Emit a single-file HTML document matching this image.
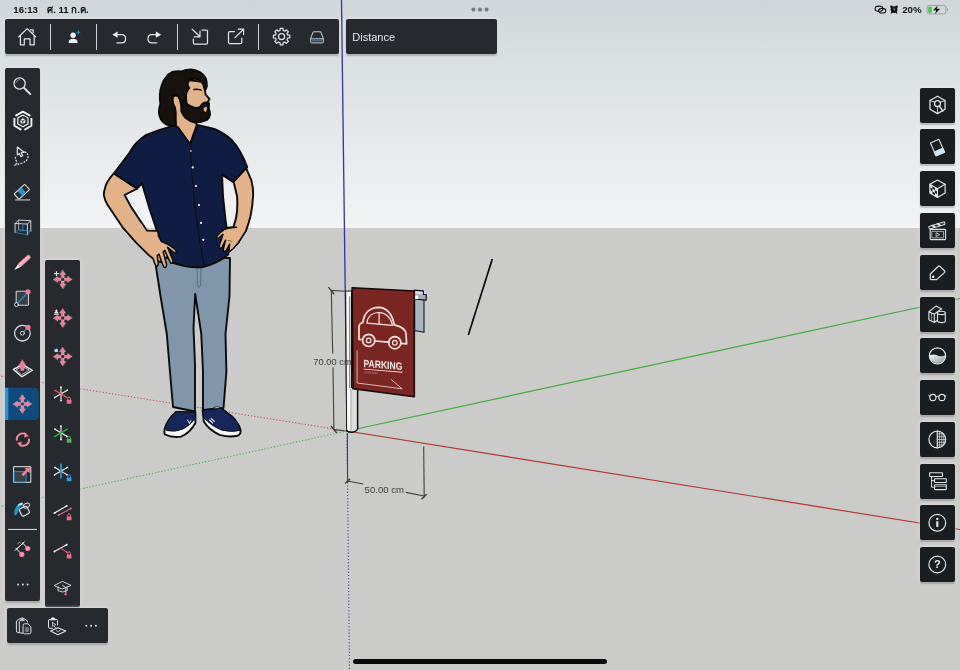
<!DOCTYPE html>
<html lang="th">
<head>
<meta charset="utf-8">
<title>SketchUp</title>
<style>
html,body{margin:0;padding:0;}
body{width:960px;height:670px;overflow:hidden;position:relative;background:#cbcbca;font-family:"Liberation Sans","DejaVu Sans",sans-serif;}
#sky{position:absolute;left:0;top:0;width:960px;height:228px;background:linear-gradient(to bottom,#d0d6d9 0,#dbe0e2 70px,#e8ebec 150px,#f1f3f4 228px);}
#scene{will-change:transform;position:absolute;left:0;top:0;width:960px;height:670px;}
.tb{will-change:transform;position:absolute;background:#262a2e;border-radius:2px;box-shadow:0 1.5px 1.5px rgba(0,0,0,.22),0 0 3px 1px rgba(238,238,236,.55);}
.tb svg{position:absolute;overflow:visible;}
.sep{position:absolute;background:#cfd3d6;}
#status{will-change:transform;position:absolute;left:0;top:0;width:960px;height:19px;color:#111;font-size:11px;font-weight:bold;}
#status>span{position:absolute;top:3px;white-space:nowrap;}
.rb{will-change:transform;position:absolute;left:920px;width:35px;height:35px;background:#1a1e21;border-radius:2px;box-shadow:0 1.5px 1.5px rgba(0,0,0,.22),0 0 3px 1px rgba(238,238,236,.55);}
.rb svg{position:absolute;left:0;top:0;}
#homebar{position:absolute;left:353px;top:659px;width:254px;height:5px;border-radius:3px;background:#0a0a0a;}
</style>
</head>
<body>
<div id="sky"></div>

<!-- SCENE -->
<svg id="scene" width="960" height="670" viewBox="0 0 960 670">
<!--SCENE-START-->
<!-- axes -->
<line x1="347" y1="431" x2="0" y2="376" stroke="#c9443c" stroke-width="1.1" stroke-dasharray="1.2 2"/>
<line x1="347" y1="431" x2="0" y2="506.5" stroke="#45b043" stroke-width="1.1" stroke-dasharray="1.2 2"/>
<line x1="347" y1="431" x2="349.5" y2="670" stroke="#3a3ca8" stroke-width="1.1" stroke-dasharray="1.1 2.1"/>
<line x1="347" y1="431" x2="960" y2="298.5" stroke="#41ab3c" stroke-width="1.2"/>
<line x1="347" y1="431" x2="960" y2="529.5" stroke="#b3352e" stroke-width="1.2"/>
<line x1="341.5" y1="0" x2="347" y2="431" stroke="#3234a0" stroke-width="1.3"/>

<!-- black guide line -->
<line x1="492.3" y1="259" x2="468.3" y2="335" stroke="#0c0c0c" stroke-width="1.7"/>

<!-- MAN -->
<g id="man" stroke="#0b0b0b" stroke-width="1.9" stroke-linejoin="round" stroke-linecap="round">
<!-- jeans -->
<path d="M156 258 L156 267 L160.5 296 L166.8 334 L170 372 L173 407 L195 411.5 L195 365 L193.5 328 L195.2 294 L201.3 334 L203 372 L203 410 L223.5 408 L226.4 372 L225.5 334 L229.5 296 L230 258 Z" fill="#8096ab"/>
<path d="M197 268 L197.5 285 Q199 290 200.5 285 L201 268" fill="none" stroke="#4f647a" stroke-width="0.8"/>
<!-- shoes -->
<path d="M176 412 Q168 419 165.3 427 Q163.6 432 165 434.5 Q172 438 181 436.6 Q190 433 195.4 423 L195.4 412.5 Z" fill="#f6f6f6"/>
<path d="M176 412 Q168 419 165.3 427 Q165 429.5 166.5 430.5 Q175 432.5 183 429 Q190 425.5 195.4 418.5 L195.4 412.5 Z" fill="#16265a" stroke-width="0.9"/>
<path d="M187.5 420 L189.5 423.5 L190.8 420.6" fill="none" stroke="#fff" stroke-width="0.9"/>
<path d="M202.6 410.5 L203.8 421.5 Q209 430 219.5 434.8 Q229 437.6 237.6 435.8 Q241.6 433.5 240.4 429.5 Q238.4 423 232 416.5 L228 413.6 L221.5 408.5 Z" fill="#f6f6f6"/>
<path d="M202.6 410.5 L203.6 417.5 Q211 426 222 430.2 Q232 432.6 240.2 430.4 L240 428.8 Q238.2 422.8 232 416.5 L228 413.6 L221.5 408.5 Z" fill="#16265a" stroke-width="0.9"/>
<path d="M209.5 420 L212.6 422.8 M211.3 418.6 L214.4 421.4" fill="none" stroke="#fff" stroke-width="1.1"/>
<path d="M213 408.2 Q216.5 405.2 221 408" fill="#f0f0f0" stroke-width="0.9"/>
<!-- left arm (viewer's left) -->
<path d="M113.8 173.4 Q106 182 104.9 188.7 Q103.6 192 104 195.9 Q105 201 107.5 204.8 L121.9 226.3 L136.2 242.5 L148.8 255 L153 258.3 L160 262 L170 255 L157 231.5 L147 230.8 L141.6 222.7 L130.9 206.6 L124.6 195 L137.1 188.7 Z" fill="#e2b389"/>
<!-- right arm -->
<path d="M246 167.9 L251.4 180.4 Q253.4 188 253.2 194.8 Q252.6 206 250.5 216.2 Q248.6 224 246 230.6 L238 243.1 L229.9 251.1 L222 250 L217 237 L221 231.5 L227 228 L233.5 227 Q236.6 218 237.1 210.9 Q237.6 203 237.1 196.5 L233.5 181.3 Z" fill="#e2b389"/>
<!-- neck -->
<path d="M172.3 97 Q174.5 94 178 95.6 L182 104 L196 118 L196.5 126 L190 144 L176 126 L175.2 108 Q172 103 172.3 97 Z" fill="#e2b389"/>
<!-- shirt -->
<path d="M171 126.3 Q158 130 145.7 135.2 Q135 142 129.3 153 L114 173.3 L137 188.5 L142 183.5 L149.6 209 L157.2 231.6 L163 246 L169 258 L171 262 Q186 268 201.6 267.3 Q217 264 228.2 254.5 L228.6 240 L225.7 221.5 L223 196 L222 174.6 L233.3 182.2 L247.2 167 Q241 150 232 140.3 Q224 133 214.3 129 L197.4 125 L190.2 144.5 L178 127.2 L174 125.6 Z" fill="#0e1d41"/>
<path d="M190.2 144 Q192 200 204 267" fill="none" stroke-width="0.9"/>
<g fill="#fff" stroke="none"><circle cx="190.8" cy="151" r="0.8"/><circle cx="192.7" cy="167.4" r="1.1"/><circle cx="196" cy="186" r="1.1"/><circle cx="199" cy="205" r="1.1"/><circle cx="201" cy="222.8" r="1.1"/><circle cx="203.3" cy="239.8" r="1.1"/></g>
<!-- hands (over shirt) -->
<path d="M141.6 222.7 L147 230.8 L157.1 231 Q158.6 232.6 158.4 236 L161.5 241.6 Q169 244 175.6 250 Q177 252.8 174.6 253 Q171.5 250.8 167.6 247.4 L173 260.4 Q173.4 263.8 170.8 263.2 Q168 258 164.8 250.4 L163.2 252 L166.6 264.5 Q166.5 268.2 164 267.2 Q161.5 262 159 254.2 L157.2 255.6 L158.2 263 Q158 266.8 156.2 266.4 Q154.5 264 153 258.3 L148.8 255 L136.2 242.5 L121.9 226.3" fill="#e2b389" stroke-width="1.5"/>
<path d="M246 230.6 L238 243.1 Q233.5 249 229.4 251.9 Q228.6 249 229.6 244.2 L226.6 250 Q224.8 252.4 223.2 250.7 Q223.6 247 225.6 240.2 L222.4 246.6 Q221 249.2 219.3 247.7 Q219 245.5 221.2 240 L223 234.4 L218.6 238 Q216.2 238.6 216.9 236 Q220 232.5 224.8 229.2 Q229 227.6 236.5 227.2" fill="#e2b389" stroke-width="1.5"/>
<path d="M228.4 240.6 Q230.2 240 231.4 241.8" fill="none" stroke="#6d6a3a" stroke-width="1.1"/>
<!-- head: face -->
<path d="M188 80 L204 82 L205 90.2 L205.5 94.4 L209.6 99.1 L207.6 102.2 L209 104 L208.5 108 L207 112.5 L203 113 L194 109 L186 104 L186 90 Z" fill="#e2b389"/>
<!-- hair -->
<path d="M191.3 69.5 Q186 69.6 181.3 71.4 Q176 71 172.5 71.9 Q168 74 165.7 77.7 Q162.5 81.5 161.5 86 Q160 90 159.9 94.4 Q159.6 99 160.4 103.8 Q159 108 158.9 112.2 Q159.2 116.5 161 119.5 Q163 123 166.7 124.7 Q171 126 175.3 125.4 L175.1 120.5 L175.6 112.2 Q175.2 108 173.5 105.9 Q172 102 172.5 98.6 Q173.2 95.4 175.6 95.3 Q178.3 95.6 179.8 98.6 L181.3 105.9 L186.3 103.5 L186 98.6 Q185.8 95 186.6 92.3 Q187.6 89.6 189.2 88.1 Q187.2 85.6 187.6 82.9 Q188.6 80.2 191.8 79.2 Q195.5 78.4 199.1 79.8 Q202 81.6 203.3 84.5 L204.9 90.2 Q206.6 88.4 206.9 86 Q207 82 205.9 78.7 Q204 74.6 200.2 72.4 Q196 70 191.3 69.5 Z" fill="#17120e"/>
<!-- beard -->
<path d="M186 98.6 L186.6 103.8 Q190 106.8 194.9 108 Q198 108.2 200.2 106.9 Q201.8 104 204.3 102.7 Q207 102.2 209 103.3 L208.5 108 Q209.8 111 210.1 114.3 Q209.6 117.6 206.9 120 Q201.5 122.6 194.9 122.6 Q189.5 121.4 185.5 117.9 Q182.6 114.6 181.3 111.1 L181.3 105.9 L183 100.5 Z" fill="#17120e"/>
<path d="M203.6 108.2 Q205.4 106.6 207 107.2 Q207.2 110 205.6 112 Q203.8 111.6 203.6 108.2 Z" fill="#e2b389" stroke="none"/>
<path d="M193.9 89.5 Q197.5 88.6 201.2 90.1" fill="none" stroke-width="1.5"/>
</g>

<!-- SIGN -->
<g id="sign">
<!-- 70cm dimension -->
<g stroke="#414141" stroke-width="1.1" fill="none">
<line x1="331.3" y1="290.5" x2="332.7" y2="353.5"/>
<line x1="333" y1="367.5" x2="333.9" y2="430"/>
<line x1="331.3" y1="290.4" x2="345" y2="291.3"/>
<line x1="333.8" y1="429.6" x2="345.5" y2="431"/>
<path d="M328.4 287.1 L334.2 294.2 M331 426 L336.8 433" stroke-width="1.4"/>
</g>
<!-- post -->
<path d="M345.7 291 L351.5 291 L351.5 388 L357.6 389.5 L357.6 429 Q356 432.2 351.3 432.2 Q347 432.2 346.6 430 Z" fill="#f7f7f7" stroke="#141414" stroke-width="1" stroke-linejoin="round"/>
<path d="M351 388.4 L357.2 389.8 L357.2 428.8 Q355.8 431.4 351 431.6 Z" fill="#dddddd"/>
<path d="M350.9 389 L350.9 431.5" stroke="#777" stroke-width="0.6"/>
<path d="M346.6 430 Q347 432.2 351.3 432.2 Q356 432.2 357.6 429 L357.6 389.6" fill="none" stroke="#0c0c0c" stroke-width="1.4"/>
<rect x="349" y="296.3" width="1.4" height="92" fill="#8d8d8d"/>
<!-- bracket -->
<path d="M414.6 298 L424 299.8 L424 332.3 L414.6 330.5 Z" fill="#a8b5c1" stroke="#15171a" stroke-width="1.1" stroke-linejoin="round"/>
<path d="M414 290.2 L423.4 290.9 L423.4 294.3 L426.2 294.7 L426.2 300.2 L414 299 Z" fill="#a5b1bc" stroke="#121416" stroke-width="1.2" stroke-linejoin="round"/>
<path d="M414.6 291.3 L422.7 291.9 L422.7 294.2 L414.6 293.7 Z" fill="#d7dde2"/>
<rect x="415" y="295.5" width="3" height="3.5" fill="#ffffff"/>
<!-- panel -->
<path d="M352.1 287.8 L414.3 291 L414.3 396.7 L353 388.7 Z" fill="#7b2621" stroke="#150908" stroke-width="1.6" stroke-linejoin="round"/>
<!-- car -->
<g fill="none" stroke="#f6e6e2" stroke-width="1.7" stroke-linejoin="round" stroke-linecap="round">
<path d="M362.4 339.7 L359 339.3 L359 327 Q359 323.5 362.9 322.5 C364 313 370 307.6 378.6 307.4 C387 307.6 392 314 394.3 324.8 C400 326 406 329 406.1 334.5 L406.6 343.8 L401.1 343.3 M388.5 342.1 L375 341"/>
<path d="M366.8 323.1 C368 316 373 312.3 379.1 312.5 C386 312.8 390.5 317 392.6 325.3 Z M379.1 312.5 L379.1 324.2" stroke-width="1.2"/>
<circle cx="368.7" cy="340.4" r="6.1"/><circle cx="368.7" cy="340.4" r="2.3" stroke-width="1.2"/>
<circle cx="394.8" cy="342.7" r="6.1"/><circle cx="394.8" cy="342.7" r="2.3" stroke-width="1.2"/>
</g>
<!-- parking text -->
<g transform="translate(363.5,366.9) skewY(4.6)">
<text x="0" y="0" font-family="'Liberation Sans',sans-serif" font-weight="bold" font-size="10.6" fill="#f8ece9" textLength="38.8" lengthAdjust="spacingAndGlyphs">PARKING</text>
<rect x="0" y="1.8" width="38.8" height="0.9" fill="#f1dcd8"/>
<text x="0.8" y="6.3" font-family="'Liberation Sans',sans-serif" font-size="2.5" fill="#dcb3ad">SP RESORT</text>
<path d="M-6.4 -16.1 L-6.4 16.6 L38.6 18.8 L27.6 10.3" fill="none" stroke="#eed6d2" stroke-width="0.8"/>
</g>
<text x="313.3" y="364.6" font-family="'Liberation Sans',sans-serif" font-size="9.6" fill="#3c3c3c" textLength="38.4" lengthAdjust="spacingAndGlyphs">70.00 cm</text>

<!-- 50cm dimension -->
<g stroke="#414141" stroke-width="1.1" fill="none">
<line x1="347.4" y1="433" x2="347.6" y2="483"/>
<line x1="423.7" y1="446.5" x2="424.2" y2="497.5"/>
<line x1="347.5" y1="481" x2="363.1" y2="484"/>
<line x1="405.8" y1="492.4" x2="424.1" y2="496"/>
<path d="M345.1 483.5 L350.1 478.9 M421.5 499.2 L426.7 494.2" stroke-width="1.5"/>
</g>
<text x="364.6" y="492.6" font-family="'Liberation Sans',sans-serif" font-size="9.6" fill="#3c3c3c" textLength="39.4" lengthAdjust="spacingAndGlyphs">50.00 cm</text>
</g>
<!--SCENE-END-->
</svg>

<!-- STATUS BAR -->
<div id="status">
<span style="left:13.3px;top:-0.5px;line-height:19px;font-size:9.6px;">16:13<span style="margin-left:9.3px;">ศ. 11 ก.ค.</span></span>
<span style="left:902.2px;top:0;line-height:19px;font-size:9.7px;">20%</span>
<svg width="90" height="19" viewBox="870 0 90 19" style="position:absolute;left:870px;top:0" fill="none">
<ellipse cx="879" cy="8.7" rx="3.9" ry="2.6" stroke="#111" stroke-width="1.1"/>
<ellipse cx="882.2" cy="10.7" rx="3.6" ry="2.3" stroke="#111" stroke-width="1.1"/>
<circle cx="894" cy="9.6" r="3.4" fill="#111"/>
<circle cx="891.4" cy="6.7" r="1.25" fill="#111"/><circle cx="896.6" cy="6.7" r="1.25" fill="#111"/><path d="M891.9 12.2 L891.3 13 M896.1 12.2 L896.7 13" stroke="#111" stroke-width="1.2" stroke-linecap="round"/>
<path d="M894 7.6 L894 9.8 L895.3 9.8" stroke="#d8dcde" stroke-width="0.6"/>
<rect x="927" y="5.4" width="19" height="8.5" rx="2.3" stroke="#9b9fa2" stroke-width="1"/>
<path d="M947.4 8.2 Q948.4 9.6 947.4 11" stroke="#9b9fa2" stroke-width="1"/>
<rect x="928.2" y="6.6" width="3.6" height="6.1" rx="1" fill="#4cc656"/>
<path d="M938.4 4.3 L932.6 10.6 L935.9 10.6 L934.2 15.2 L940.6 8.5 L937 8.5 Z" fill="#0c0c0c" stroke="#d9dcde" stroke-width="0.6"/>
</svg>
<svg width="24" height="19" viewBox="468 0 24 19" style="position:absolute;left:468px;top:0"><circle cx="473.5" cy="9.6" r="2.05" fill="#787c7f"/><circle cx="480" cy="9.6" r="2.05" fill="#787c7f"/><circle cx="486.5" cy="9.6" r="2.05" fill="#787c7f"/></svg>
</div>

<!-- TOP TOOLBAR -->
<div class="tb" id="top1" style="left:5px;top:19px;width:334px;height:35px;">
<svg width="334" height="35" viewBox="5 19 334 35" style="left:0;top:0" fill="none" stroke="#dfe3e6" stroke-width="1.25" stroke-linecap="round" stroke-linejoin="round">
<!-- home -->
<path d="M18.8 36.8 L27.2 28.6 L35.6 36.8 M20.4 35.6 L20.4 44.8 L24.3 44.8 L24.3 38.8 L30 38.8 L30 44.8 L34.2 44.8 L34.2 35.6 M30.5 29.8 L33.2 29.8 L33.2 32.6"/>
<!-- person -->
<circle cx="73.1" cy="35.2" r="2.7" fill="#eef1f3" stroke="none"/>
<path d="M68.6 42.9 Q68.6 38.8 73.1 38.8 Q77.6 38.8 77.6 42.9 Z" fill="#eef1f3" stroke="none"/>
<path d="M78.4 30.8 L78.4 33.8 M76.9 32.3 L79.9 32.3" stroke="#1f9ad6" stroke-width="0.9"/>
<!-- undo -->
<path d="M116.5 34.7 L121.6 34.7 Q125.6 34.7 125.6 38.7 Q125.6 42.8 121.6 42.8 L116.8 42.8"/>
<path d="M112.3 34.7 L117.6 31.6 L117.6 37.8 Z" fill="#eef1f3" stroke="none"/>
<!-- redo -->
<path d="M157 34.7 L152 34.7 Q148 34.7 148 38.7 Q148 42.8 152 42.8 L156.8 42.8"/>
<path d="M161.2 34.7 L155.9 31.6 L155.9 37.8 Z" fill="#eef1f3" stroke="none"/>
<!-- import -->
<path d="M192.2 29.2 L200 36.8 M200 31 L200 36.8 L194.2 36.8 M193.4 39 L193.4 43 Q193.4 44.2 194.6 44.2 L206.3 44.2 Q207.5 44.2 207.5 43 L207.5 31.2 Q207.5 30 206.3 30 L202 30"/>
<!-- export -->
<path d="M234.4 31.5 L229.7 31.5 Q228.5 31.5 228.5 32.7 L228.5 42.4 Q228.5 43.6 229.7 43.6 L240.6 43.6 Q241.8 43.6 241.8 42.4 L241.8 38.2 M235 37.6 L243.6 29.2 M238.2 29.2 L243.6 29.2 L243.6 34.6"/>
<!-- gear -->
<circle cx="281.6" cy="36.6" r="3.1"/>
<path d="M280.04 30.50 L280.20 28.42 L283.00 28.42 L283.16 30.50 L284.81 31.18 L286.39 29.82 L288.38 31.81 L287.02 33.39 L287.70 35.04 L289.78 35.20 L289.78 38.00 L287.70 38.16 L287.02 39.81 L288.38 41.39 L286.39 43.38 L284.81 42.02 L283.16 42.70 L283.00 44.78 L280.20 44.78 L280.04 42.70 L278.39 42.02 L276.81 43.38 L274.82 41.39 L276.18 39.81 L275.50 38.16 L273.42 38.00 L273.42 35.20 L275.50 35.04 L276.18 33.39 L274.82 31.81 L276.81 29.82 L278.39 31.18 Z" stroke-linejoin="round"/>
<!-- drive -->
<path stroke-width="1" stroke="#c9ced2" d="M313.6 31.8 L320.8 31.8 L323.3 38.8 L323.3 42.2 Q323.3 42.9 322.6 42.9 L311.4 42.9 Q310.7 42.9 310.7 42.2 L310.7 38.8 Z M310.9 38.8 L323.1 38.8"/>
<path d="M312.5 40.8 L321.5 40.8" stroke="#5bb0c8" stroke-width="0.8"/>
</svg>
<div class="sep" style="left:45px;top:4.5px;width:1px;height:26.5px"></div>
<div class="sep" style="left:90.7px;top:4.5px;width:1px;height:26.5px"></div>
<div class="sep" style="left:172.2px;top:4.5px;width:1px;height:26.5px"></div>
<div class="sep" style="left:253.2px;top:4.5px;width:1px;height:26.5px"></div>

</div>
<div class="tb" id="top2" style="left:346px;top:19px;width:151px;height:35px;color:#e6e9eb;font-size:11px;">
<span style="position:absolute;left:6.3px;top:11.7px;">Distance</span>
</div>

<!-- LEFT TOOLBAR -->
<div class="tb" id="left1" style="left:5px;top:68px;width:35px;height:533px;">
<!--LEFT1-->
<svg width="35" height="533" viewBox="5 68 35 533" style="left:0;top:0" fill="none" stroke="#dfe3e6" stroke-width="1.2" stroke-linecap="round" stroke-linejoin="round">
<path d="M5 387.8 L34.2 387.8 Q38.7 387.8 38.7 392.3 L38.7 415.5 Q38.7 420 34.2 420 L5 420 Z" fill="#0f4b7a" stroke="none"/>
<rect x="5" y="387.8" width="3.3" height="32.2" fill="#1d97db" stroke="none"/>
<circle cx="19.6" cy="83.5" r="5.6" stroke-width="1.3"/>
<path d="M16.2 82.4 Q16.8 79.8 19.4 79.6" stroke-width="0.7" stroke="#aab1b7"/>
<path d="M24.2 88 L30.3 94.1" stroke-width="1.9"/>
<path d="M15.4 115.9 L22.9 111.6 L30.4 115.9 M14.4 118 L14.4 125.8 L21.4 129.9 M31.4 118 L31.4 125.8 L24.4 129.9" stroke-width="1.9" stroke="#eef1f3" stroke-linecap="butt"/>
<path d="M22.90 115.00 L28.01 117.95 L28.01 123.85 L22.90 126.80 L17.79 123.85 L17.79 117.95 Z" stroke-width="1.3"/>
<path d="M22.90 118.20 L25.41 119.65 L25.41 122.55 L22.90 124.00 L20.39 122.55 L20.39 119.65 Z" fill="#e8ecee" stroke="none"/>
<path d="M22.9 121.10000000000001 L22.9 124.0 M22.9 121.10000000000001 L20.4 119.65 M22.9 121.10000000000001 L25.4 119.65" stroke="#272b2f" stroke-width="0.7"/>
<path d="M17.3 147 L17.3 155 L19.3 153.5 L20.8 156.6 L22.7 155.7 L21.3 152.7 L24 152.3 Z" stroke-width="1.2"/>
<path d="M24.5 151.6 Q28.4 153.4 28 157 Q27.4 161.3 22.5 163 Q18.5 164.2 14.6 165.2 Q17.8 163.4 16.2 160.6 Q14.6 157.8 16 155.8" stroke-width="1.2" stroke-dasharray="1.9 1.2" stroke-linecap="butt"/>
<g transform="translate(21.8 191.8) rotate(-42)"><rect x="-7.2" y="-3.6" width="14.4" height="7.2" rx="0.6" fill="#272b2f" stroke-width="1.1"/><rect x="-2.6" y="-3.1" width="5.2" height="6.2" fill="#1f96d8" stroke="none"/></g>
<path d="M15.2 199.9 L30.2 199.9" stroke="#9aa1a7" stroke-width="1.5" stroke-linecap="butt"/>
<g stroke-width="0.9"><path d="M15.1 232.4 L15.1 223.5 L18.6 220.1 L30.8 220.7 L30.8 231.3 M15.1 223.5 L27.4 224 L30.8 220.7 M27.4 224 L27.4 234.9" /><path d="M18.6 229.6 L18.6 220.1" stroke-width="0.6"/><path d="M15.1 232.4 L27.4 234.9 L30.8 231.3 M15.1 232.4 L18.6 229.6 L30.8 231.3" stroke="#2a86c0" stroke-width="0.8"/><path d="M22.9 223.2 L22.9 230.6 M19.4 230.9 L26.6 230.3" stroke="#2a86c0" stroke-width="0.9"/></g>
<g transform="translate(22 263) rotate(-42)"><rect x="-3.8" y="-2" width="14.2" height="4" rx="1.2" fill="#f2a6ba" stroke="#e8718f" stroke-width="0.5"/><path d="M-3.8 -1.9 L-10.4 0 L-3.8 1.9 Z" fill="#f4f4f4" stroke="none"/><path d="M-3.8 -0.6 L10 -0.6" stroke="#f8cfd9" stroke-width="0.8"/></g>
<rect x="16.2" y="291.2" width="12.3" height="14" rx="0.6" fill="#3b4046" stroke-width="1.1" stroke="#c9ced2"/>
<path d="M16.8 304.3 L28 292" stroke="#2a86bd" stroke-width="1.3"/>
<circle cx="28" cy="291.8" r="2.6" fill="#ef7b97" stroke="none"/><circle cx="16.4" cy="304.6" r="1.9" fill="#0c0d0e" stroke="#f0f2f3" stroke-width="0.9"/>
<circle cx="22.4" cy="333.2" r="7.8" stroke-width="1.3" stroke="#d5dadd"/>
<path d="M22.4 333.2 L28 327.3" stroke="#2a86bd" stroke-width="1.3"/>
<circle cx="28" cy="327.3" r="2.6" fill="#ef7b97" stroke="none"/><circle cx="22.4" cy="333.2" r="1.9" fill="#0c0d0e" stroke="#f0f2f3" stroke-width="0.9"/>
<path d="M13.4 369.4 L22.4 364.6 L32.4 370.2 L21.9 376.8 Z" stroke-width="1.3" stroke="#f0f2f3"/>
<path d="M16.4 369.5 L22.4 366.5 L29.3 370.2 L21.9 374.6 Z" stroke-width="0.8"/>
<path d="M22.4 360 L26.1 365.8 L24 365.8 L24 370.4 L20.7 370.4 L20.7 365.8 L18.7 365.8 Z" fill="#ef7b97" stroke="#f28aa2" stroke-width="0.5"/>
<path transform="translate(22.4 404) rotate(0)" d="M0 -9.2 L2.9 -4.8999999999999995 L1.45 -4.8999999999999995 L1.45 -1.7 L-1.45 -1.7 L-1.45 -4.8999999999999995 L-2.9 -4.8999999999999995 Z" fill="#ef7b97" stroke="#f7d5dc" stroke-width="0.35" stroke-linejoin="round"/>
<path transform="translate(22.4 404) rotate(90)" d="M0 -9.2 L2.9 -4.8999999999999995 L1.45 -4.8999999999999995 L1.45 -1.7 L-1.45 -1.7 L-1.45 -4.8999999999999995 L-2.9 -4.8999999999999995 Z" fill="#ef7b97" stroke="#f7d5dc" stroke-width="0.35" stroke-linejoin="round"/>
<path transform="translate(22.4 404) rotate(180)" d="M0 -9.2 L2.9 -4.8999999999999995 L1.45 -4.8999999999999995 L1.45 -1.7 L-1.45 -1.7 L-1.45 -4.8999999999999995 L-2.9 -4.8999999999999995 Z" fill="#ef7b97" stroke="#f7d5dc" stroke-width="0.35" stroke-linejoin="round"/>
<path transform="translate(22.4 404) rotate(270)" d="M0 -9.2 L2.9 -4.8999999999999995 L1.45 -4.8999999999999995 L1.45 -1.7 L-1.45 -1.7 L-1.45 -4.8999999999999995 L-2.9 -4.8999999999999995 Z" fill="#ef7b97" stroke="#f7d5dc" stroke-width="0.35" stroke-linejoin="round"/>
<g stroke="#f08fa5" stroke-width="1.9" stroke-linecap="butt"><path d="M16.9 440.6 A6 6 0 0 1 26 434.4"/><path d="M28.9 438.6 A6 6 0 0 1 19.8 444.8"/></g>
<path d="M24.6 432 L28.9 436.2 L24.2 437.6 Z M21.2 447.2 L16.9 443 L21.6 441.6 Z" fill="#ef7b97" stroke="none"/>
<rect x="14" y="466.7" width="16.8" height="15.6" stroke-width="1" stroke="#e8ebed"/>
<rect x="14.5" y="471.6" width="11.6" height="10.4" fill="#3b4046" stroke="#1f96d8" stroke-width="1"/>
<path d="M30.3 467.4 L29.6 473.2 L27.9 471.6 L23.4 476.2 L21.4 474.2 L26 469.7 L24.5 468.1 Z" fill="#ef7b97" stroke="none"/>
<g transform="translate(24.3 511.2) rotate(-28)"><rect x="-4.1" y="-4" width="8.4" height="8" rx="1.6" fill="#272b2f" stroke-width="1.1" stroke="#eef1f3"/></g>
<ellipse cx="26.4" cy="505.6" rx="3.3" ry="2.2" transform="rotate(-28 26.4 505.6)" stroke-width="0.9"/>
<path d="M22.6 502.2 Q16 503.4 14.3 511.5 Q14 514 15.3 515.4 Q17.4 515 18 512 Q19 507 23 505.2 Z" fill="#1f96d8" stroke="none"/>
<path d="M22.2 502.6 Q18.4 503.6 16.8 506.6 Q19.6 504.4 22.8 504.6 Z" fill="#f2f6f8" stroke="none"/>
<rect x="8" y="528.9" width="29" height="1.1" fill="#cfd3d6" stroke="none"/>
<path d="M27.7 548.5 L22.3 542.6 M21.8 554.4 L16 548.4 M16.6 549 L22.9 543.2 M15.2 550.4 L18.2 547.4 M21.6 544.8 L24.4 541.8" stroke-width="1" stroke="#eef1f3"/>
<path d="M17.8 543.6 L19.4 542.2 L20.6 543.4" stroke-width="0.6"/>
<circle cx="27.7" cy="548.5" r="2.6" fill="#ef7b97" stroke="none"/><circle cx="21.8" cy="554.4" r="2.6" fill="#ef7b97" stroke="none"/>
<circle cx="27.7" cy="548.5" r="0.9" fill="#f9c9d4" stroke="none"/><circle cx="21.8" cy="554.4" r="0.9" fill="#f9c9d4" stroke="none"/>
<rect x="17.25" y="583.7" width="1.7" height="1.7" fill="#e4e7ea" stroke="none"/>
<rect x="22.0" y="583.7" width="1.7" height="1.7" fill="#e4e7ea" stroke="none"/>
<rect x="26.75" y="583.7" width="1.7" height="1.7" fill="#e4e7ea" stroke="none"/>
</svg>
<!--/LEFT1-->
</div>
<div class="tb" id="left2" style="left:45px;top:260px;width:35px;height:347px;">
<!--LEFT2-->
<svg width="35" height="347" viewBox="45 260 35 347" style="left:0;top:0" fill="none" stroke="#dfe3e6" stroke-width="1.1" stroke-linecap="round" stroke-linejoin="round">
<path transform="translate(62.7 279.4) rotate(0)" d="M0 -9.2 L2.9 -4.8999999999999995 L1.45 -4.8999999999999995 L1.45 -1.7 L-1.45 -1.7 L-1.45 -4.8999999999999995 L-2.9 -4.8999999999999995 Z" fill="#ef7b97" stroke="#f7d5dc" stroke-width="0.35" stroke-linejoin="round"/>
<path transform="translate(62.7 279.4) rotate(90)" d="M0 -9.2 L2.9 -4.8999999999999995 L1.45 -4.8999999999999995 L1.45 -1.7 L-1.45 -1.7 L-1.45 -4.8999999999999995 L-2.9 -4.8999999999999995 Z" fill="#ef7b97" stroke="#f7d5dc" stroke-width="0.35" stroke-linejoin="round"/>
<path transform="translate(62.7 279.4) rotate(180)" d="M0 -9.2 L2.9 -4.8999999999999995 L1.45 -4.8999999999999995 L1.45 -1.7 L-1.45 -1.7 L-1.45 -4.8999999999999995 L-2.9 -4.8999999999999995 Z" fill="#ef7b97" stroke="#f7d5dc" stroke-width="0.35" stroke-linejoin="round"/>
<path transform="translate(62.7 279.4) rotate(270)" d="M0 -9.2 L2.9 -4.8999999999999995 L1.45 -4.8999999999999995 L1.45 -1.7 L-1.45 -1.7 L-1.45 -4.8999999999999995 L-2.9 -4.8999999999999995 Z" fill="#ef7b97" stroke="#f7d5dc" stroke-width="0.35" stroke-linejoin="round"/>
<path d="M56.4 271.6 L56.4 275.8 M54.3 273.7 L58.5 273.7" stroke="#f4f6f7" stroke-width="1"/>
<path transform="translate(62.7 318) rotate(0)" d="M0 -9.2 L2.9 -4.8999999999999995 L1.45 -4.8999999999999995 L1.45 -1.7 L-1.45 -1.7 L-1.45 -4.8999999999999995 L-2.9 -4.8999999999999995 Z" fill="#ef7b97" stroke="#f7d5dc" stroke-width="0.35" stroke-linejoin="round"/>
<path transform="translate(62.7 318) rotate(90)" d="M0 -9.2 L2.9 -4.8999999999999995 L1.45 -4.8999999999999995 L1.45 -1.7 L-1.45 -1.7 L-1.45 -4.8999999999999995 L-2.9 -4.8999999999999995 Z" fill="#ef7b97" stroke="#f7d5dc" stroke-width="0.35" stroke-linejoin="round"/>
<path transform="translate(62.7 318) rotate(180)" d="M0 -9.2 L2.9 -4.8999999999999995 L1.45 -4.8999999999999995 L1.45 -1.7 L-1.45 -1.7 L-1.45 -4.8999999999999995 L-2.9 -4.8999999999999995 Z" fill="#ef7b97" stroke="#f7d5dc" stroke-width="0.35" stroke-linejoin="round"/>
<path transform="translate(62.7 318) rotate(270)" d="M0 -9.2 L2.9 -4.8999999999999995 L1.45 -4.8999999999999995 L1.45 -1.7 L-1.45 -1.7 L-1.45 -4.8999999999999995 L-2.9 -4.8999999999999995 Z" fill="#ef7b97" stroke="#f7d5dc" stroke-width="0.35" stroke-linejoin="round"/>
<path d="M54.4 314.3 L58.4 314.3 M55 312.8 Q56.4 311.6 55.8 310.4 Q56.4 309.2 57 310.4 Q56.4 311.6 57.8 312.8 Z" stroke="#f4f6f7" stroke-width="0.9" fill="#f4f6f7"/>
<path transform="translate(62.7 356.6) rotate(0)" d="M0 -9.2 L2.9 -4.8999999999999995 L1.45 -4.8999999999999995 L1.45 -1.7 L-1.45 -1.7 L-1.45 -4.8999999999999995 L-2.9 -4.8999999999999995 Z" fill="#ef7b97" stroke="#f7d5dc" stroke-width="0.35" stroke-linejoin="round"/>
<path transform="translate(62.7 356.6) rotate(90)" d="M0 -9.2 L2.9 -4.8999999999999995 L1.45 -4.8999999999999995 L1.45 -1.7 L-1.45 -1.7 L-1.45 -4.8999999999999995 L-2.9 -4.8999999999999995 Z" fill="#ef7b97" stroke="#f7d5dc" stroke-width="0.35" stroke-linejoin="round"/>
<path transform="translate(62.7 356.6) rotate(180)" d="M0 -9.2 L2.9 -4.8999999999999995 L1.45 -4.8999999999999995 L1.45 -1.7 L-1.45 -1.7 L-1.45 -4.8999999999999995 L-2.9 -4.8999999999999995 Z" fill="#ef7b97" stroke="#f7d5dc" stroke-width="0.35" stroke-linejoin="round"/>
<path transform="translate(62.7 356.6) rotate(270)" d="M0 -9.2 L2.9 -4.8999999999999995 L1.45 -4.8999999999999995 L1.45 -1.7 L-1.45 -1.7 L-1.45 -4.8999999999999995 L-2.9 -4.8999999999999995 Z" fill="#ef7b97" stroke="#f7d5dc" stroke-width="0.35" stroke-linejoin="round"/>
<path d="M54.6 348.5 L55.8 349.5 L56.8 348.5 L57.9 349.5 L57.9 352 L54.6 352 Z" fill="#b9def2" stroke="none"/>
<path d="M61.0 387.2 L61.0 400.6" stroke="#eef1f3" stroke-width="1.1"/>
<circle cx="61.0" cy="387.2" r="0.9" fill="#eef1f3" stroke="none"/><circle cx="61.0" cy="400.6" r="0.9" fill="#eef1f3" stroke="none"/>
<path d="M54.6 397.6 L67.3 390.2" stroke="#eef1f3" stroke-width="1.1"/>
<circle cx="54.6" cy="397.6" r="0.9" fill="#eef1f3" stroke="none"/><circle cx="67.3" cy="390.2" r="0.9" fill="#eef1f3" stroke="none"/>
<path d="M55.0 390.3 L66.8 397.4" stroke="#e2506f" stroke-width="1.5"/>
<rect x="66.69999999999999" y="399.8" width="4.8" height="3.9" rx="0.6" fill="#ee6f8c" stroke="none"/><path d="M67.69999999999999 399.8 L67.69999999999999 398.6 A1.4 1.4 0 0 1 70.5 398.6 L70.5 399.8" fill="none" stroke="#ee6f8c" stroke-width="0.9"/>
<path d="M61.0 426.1 L61.0 439.5" stroke="#eef1f3" stroke-width="1.1"/>
<circle cx="61.0" cy="426.1" r="0.9" fill="#eef1f3" stroke="none"/><circle cx="61.0" cy="439.5" r="0.9" fill="#eef1f3" stroke="none"/>
<path d="M55.0 429.2 L66.8 436.3" stroke="#eef1f3" stroke-width="1.1"/>
<circle cx="55.0" cy="429.2" r="0.9" fill="#eef1f3" stroke="none"/><circle cx="66.8" cy="436.3" r="0.9" fill="#eef1f3" stroke="none"/>
<path d="M54.6 436.5 L67.3 429.1" stroke="#2fa63a" stroke-width="1.5"/>
<rect x="66.69999999999999" y="438.9" width="4.8" height="3.9" rx="0.6" fill="#55b35d" stroke="none"/><path d="M67.69999999999999 438.9 L67.69999999999999 437.7 A1.4 1.4 0 0 1 70.5 437.7 L70.5 438.9" fill="none" stroke="#55b35d" stroke-width="0.9"/>
<path d="M55.0 467.5 L66.8 474.6" stroke="#eef1f3" stroke-width="1.1"/>
<circle cx="55.0" cy="467.5" r="0.9" fill="#eef1f3" stroke="none"/><circle cx="66.8" cy="474.6" r="0.9" fill="#eef1f3" stroke="none"/>
<path d="M54.6 474.8 L67.3 467.4" stroke="#eef1f3" stroke-width="1.1"/>
<circle cx="54.6" cy="474.8" r="0.9" fill="#eef1f3" stroke="none"/><circle cx="67.3" cy="467.4" r="0.9" fill="#eef1f3" stroke="none"/>
<path d="M61.0 464.4 L61.0 477.8" stroke="#2a9fdc" stroke-width="1.7"/>
<rect x="66.69999999999999" y="477.40000000000003" width="4.8" height="3.9" rx="0.6" fill="#2a9fdc" stroke="none"/><path d="M67.69999999999999 477.40000000000003 L67.69999999999999 476.20000000000005 A1.4 1.4 0 0 1 70.5 476.20000000000005 L70.5 477.40000000000003" fill="none" stroke="#2a9fdc" stroke-width="0.9"/>
<path d="M54.5 513 L66.6 506" stroke="#f4f6f7" stroke-width="1.1"/><circle cx="54.5" cy="513" r="1" fill="#f4f6f7" stroke="none"/><circle cx="66.6" cy="506" r="1" fill="#f4f6f7" stroke="none"/>
<path d="M58.5 515.2 L70.8 508.5" stroke="#e2629c" stroke-width="1.1"/><circle cx="58.5" cy="515.2" r="0.9" fill="#e66aa4" stroke="none"/><circle cx="70.8" cy="508.5" r="0.9" fill="#e66aa4" stroke="none"/>
<rect x="66.69999999999999" y="516.4" width="4.8" height="3.9" rx="0.6" fill="#ee6f8c" stroke="none"/><path d="M67.69999999999999 516.4 L67.69999999999999 515.2 A1.4 1.4 0 0 1 70.5 515.2 L70.5 516.4" fill="none" stroke="#ee6f8c" stroke-width="0.9"/>
<path d="M54.5 551.6 L66.6 544.8" stroke="#f4f6f7" stroke-width="1.1"/><circle cx="54.5" cy="551.6" r="1" fill="#f4f6f7" stroke="none"/><circle cx="66.6" cy="544.8" r="1" fill="#f4f6f7" stroke="none"/>
<path d="M60.7 548.2 L66.8 552.1" stroke="#e2506f" stroke-width="1.1"/><circle cx="66.8" cy="552.1" r="0.9" fill="#e2506f" stroke="none"/>
<rect x="66.69999999999999" y="554.5" width="4.8" height="3.9" rx="0.6" fill="#ee6f8c" stroke="none"/><path d="M67.69999999999999 554.5 L67.69999999999999 553.3000000000001 A1.4 1.4 0 0 1 70.5 553.3000000000001 L70.5 554.5" fill="none" stroke="#ee6f8c" stroke-width="0.9"/>
<path d="M54.4 585.4 L62.5 581.4 L71 585.4 L62.5 588.9 Z M58 587.2 L58 590.6 Q62.5 593.4 67.2 590.6 L67.2 587.2 M62.5 585.4 L65.8 587.6 L65.8 593" stroke-width="0.9"/>
<circle cx="65.6" cy="594.3" r="1.2" fill="#ec5d7f" stroke="none"/>
</svg>
<!--/LEFT2-->
</div>
<div class="tb" id="bottom1" style="left:7px;top:608px;width:101px;height:35px;">
<!--BOTTOM1-->
<svg width="101" height="35" viewBox="7 608 101 35" style="left:0;top:0" fill="none" stroke="#dfe3e6" stroke-width="1" stroke-linecap="round" stroke-linejoin="round">
<path d="M16.4 621.6 Q16.4 620.7 17.2 620.4 L22.1 617.7 L26.6 620.2 Q27.6 620.9 27.6 622 M16.4 621.6 L16.4 631 Q16.4 632.4 17.8 632.6 L22.6 633.2 M19.3 621.6 L19.3 632.4" />
<path d="M20 620.4 L22.1 618.6 L24.3 620.4 Z" fill="#eef1f3" stroke-width="0.6"/>
<path d="M23 625.2 Q23 623.8 24.4 623.8 L28 623.8 L30.9 626.6 L30.9 632.4 Q30.9 633.8 29.5 633.8 L24.4 633.8 Q23 633.8 23 632.4 Z" fill="#272b2f"/>
<path d="M25.6 627.6 L28.4 627.6 L28.4 631.6 L25.6 631.6 Z M27 627.6 L27 631.6 M25.6 629 L28.4 629 M25.6 630.3 L28.4 630.3" stroke-width="0.5" stroke="#aeb5ba"/>
<path d="M48.5 620.6 Q48.5 619.4 49.7 619.4 L56.3 619.4 Q57.5 619.4 57.5 620.6 L57.5 625 M48.5 620.6 L48.5 627 Q48.5 628.3 49.8 628.3 L52.4 628.3"/>
<path d="M50.6 619.8 Q50.8 617.6 53 617.4 Q55.2 617.6 55.4 619.8 Z" fill="#eef1f3" stroke-width="0.5"/>
<path d="M52.6 622.6 L52.6 626.6 L53.8 625.6 L56.2 628.4 M52.6 622.6 L55.8 624.6 L54.6 625" stroke-width="0.8"/>
<path d="M50.6 630.9 L57.9 627.7 L65.8 630.9 L57.9 634.8 Z" stroke-width="1.1"/>
<path d="M56.2 630 L58.4 632 L60.6 629.6" stroke-width="0.8"/>
<rect x="85.45" y="624.9" width="1.7" height="1.7" fill="#e4e7ea" stroke="none"/>
<rect x="90.25" y="624.9" width="1.7" height="1.7" fill="#e4e7ea" stroke="none"/>
<rect x="95.05000000000001" y="624.9" width="1.7" height="1.7" fill="#e4e7ea" stroke="none"/>
</svg>
<!--/BOTTOM1-->
</div>

<!-- RIGHT TOOLBAR -->
<div id="right">
<!--RIGHT-->
<div class="rb" style="top:88px"><svg width="35" height="35" viewBox="920 88 35 35" fill="none" stroke="#dfe3e6" stroke-linecap="round" stroke-linejoin="round"><path d="M937.50 96.20 L945.03 100.55 L945.03 109.25 L937.50 113.60 L929.97 109.25 L929.97 100.55 Z" stroke-width="1.3"/><circle cx="937.5" cy="103.6" r="3" stroke-width="1.2"/><path d="M939.3 105.8 L942.8 111.1" stroke-width="1.5"/><path d="M930.0 100.5 L935.1 102.3 M945.0 100.5 L939.9 102.3 M937.5 106.39999999999999 L937.5 113.5" stroke-width="0.9"/></svg></div>
<div class="rb" style="top:129px"><svg width="35" height="35" viewBox="920 129 35 35" fill="none" stroke="#dfe3e6" stroke-linecap="round" stroke-linejoin="round"><g transform="translate(937.5 147.60000000000002) rotate(-24)"><path d="M-4.6 -7 L4.6 -7 L4.6 7 L-4.6 7 Z" stroke-width="1.1"/><path d="M-4.6 2.6 L4.6 2.6 L4.6 7 L-4.6 7 Z" fill="#cfe7f6" stroke="#cfe7f6" stroke-width="0.8"/></g></svg></div>
<div class="rb" style="top:171px"><svg width="35" height="35" viewBox="920 171 35 35" fill="none" stroke="#dfe3e6" stroke-linecap="round" stroke-linejoin="round"><path d="M929.88 184.30 L932.42 185.77 L932.42 188.67 L929.88 187.20 Z" fill="#e8ecee" stroke="none"/><path d="M929.88 190.10 L932.42 191.57 L932.42 194.47 L929.88 193.00 Z" fill="#e8ecee" stroke="none"/><path d="M932.42 188.67 L934.96 190.13 L934.96 193.03 L932.42 191.57 Z" fill="#e8ecee" stroke="none"/><path d="M934.96 187.23 L937.50 188.70 L937.50 191.60 L934.96 190.13 Z" fill="#e8ecee" stroke="none"/><path d="M934.96 193.03 L937.50 194.50 L937.50 197.40 L934.96 195.93 Z" fill="#e8ecee" stroke="none"/><path d="M937.50 179.90 L945.12 184.30 L945.12 193.10 L937.50 197.50 L929.88 193.10 L929.88 184.30 Z" stroke-width="1.2"/><path d="M937.5 188.70000000000002 L937.5 197.4 M937.5 188.70000000000002 L929.88 184.30 M937.5 188.70000000000002 L945.12 184.30" stroke-width="1.1"/></svg></div>
<div class="rb" style="top:213px"><svg width="35" height="35" viewBox="920 213 35 35" fill="none" stroke="#dfe3e6" stroke-linecap="round" stroke-linejoin="round"><rect x="930.2" y="229.4" width="15.4" height="10.2" rx="0.8" stroke-width="1.1"/><rect x="932.2" y="231.4" width="11.4" height="6.4" stroke-width="0.7"/><path d="M936.4 232.9 L939.8 234.6 L936.4 236.3 Z" stroke-width="0.8"/><g transform="translate(929.8 228.9) rotate(-17)"><rect x="0" y="-2.6" width="16" height="2.7" stroke-width="0.9"/><path d="M2.5 -2.6 L4.5 0.1 L6.5 0.1 L4.5 -2.6 Z M8 -2.6 L10 0.1 L12 0.1 L10 -2.6 Z M13.2 -2.6 L15 0.1" fill="#e8ecee" stroke-width="0.4"/></g></svg></div>
<div class="rb" style="top:255px"><svg width="35" height="35" viewBox="920 255 35 35" fill="none" stroke="#dfe3e6" stroke-linecap="round" stroke-linejoin="round"><path d="M930.3 274.0 L938.3 266.2 Q939 265.5 939.7 266.2 L944.7 271.0 Q945.4 271.7 944.7 272.4 L936.6 279.59999999999997 L931.3 279.59999999999997 Q930.3 279.59999999999997 930.3 278.59999999999997 Z" stroke-width="1.2"/><circle cx="933.2" cy="276.79999999999995" r="1.2" fill="#f4f6f7" stroke="none"/></svg></div>
<div class="rb" style="top:297px"><svg width="35" height="35" viewBox="920 297 35 35" fill="none" stroke="#dfe3e6" stroke-linecap="round" stroke-linejoin="round"><path d="M928.9 311.8 L936.2 305.90000000000003 L941.8 309.1 M928.9 311.8 L928.9 319.70000000000005 L934.3 322.5 L934.3 314.3 L928.9 311.8 M934.3 314.3 L941.2 308.90000000000003 M934.3 322.5 L937.4 320.3" stroke-width="1.1"/><path d="M937.5 312.90000000000003 L937.5 320.90000000000003 A3.9 1.7 0 0 0 945.3 320.90000000000003 L945.3 312.90000000000003" fill="#1a1e21" stroke-width="1.1"/><ellipse cx="941.4" cy="312.90000000000003" rx="3.9" ry="1.7" fill="#1a1e21" stroke-width="1.1"/><path d="M931.6 313.5 L931.6 320.5" stroke-width="0.6"/></svg></div>
<div class="rb" style="top:338px"><svg width="35" height="35" viewBox="920 338 35 35" fill="none" stroke="#dfe3e6" stroke-linecap="round" stroke-linejoin="round"><defs><linearGradient id="stg" x1="0" y1="0" x2="1" y2="1"><stop offset="0" stop-color="#f6f8f9"/><stop offset="1" stop-color="#8c979f"/></linearGradient></defs><path d="M929.5 355.5 Q933.5 353.7 937.5 355.5 Q941.5 357.29999999999995 945.5 355.29999999999995 A8 8 0 0 1 929.5 355.5 Z" fill="url(#stg)" stroke="none"/><circle cx="937.5" cy="355.9" r="8.1" stroke-width="1.2" stroke="#eef1f3"/></svg></div>
<div class="rb" style="top:380px"><svg width="35" height="35" viewBox="920 380 35 35" fill="none" stroke="#dfe3e6" stroke-linecap="round" stroke-linejoin="round"><circle cx="932.9" cy="397.5" r="3.1" stroke-width="1.1"/><circle cx="941.9" cy="397.5" r="3.1" stroke-width="1.1"/><path d="M936 396.7 Q937.4 395.7 938.8 396.7 M929.9 396.5 L928.8 395.6 M944.9 396.5 L946 395.6" stroke-width="1"/></svg></div>
<div class="rb" style="top:422px"><svg width="35" height="35" viewBox="920 422 35 35" fill="none" stroke="#dfe3e6" stroke-linecap="round" stroke-linejoin="round"><circle cx="937.3" cy="439.5" r="8.4" stroke-width="1.2"/><path d="M937.3 431.1 L937.3 447.9" stroke-width="1.2"/><path d="M939.5999999999999 431.42 L939.5999999999999 447.58" stroke-width="0.7"/><path d="M941.9 432.47 L941.9 446.53" stroke-width="0.7"/><path d="M943.9 434.30 L943.9 444.70" stroke-width="0.7"/><path d="M937.3 433.9 L943.56 433.9" stroke-width="0.7"/><path d="M937.3 436.7 L945.22 436.7" stroke-width="0.7"/><path d="M937.3 439.5 L945.70 439.5" stroke-width="0.7"/><path d="M937.3 442.3 L945.22 442.3" stroke-width="0.7"/><path d="M937.3 445.1 L943.56 445.1" stroke-width="0.7"/></svg></div>
<div class="rb" style="top:464px"><svg width="35" height="35" viewBox="920 464 35 35" fill="none" stroke="#dfe3e6" stroke-linecap="round" stroke-linejoin="round"><rect x="929.6" y="472.7" width="12.9" height="3.8" rx="0.5" stroke-width="1.1"/><rect x="934.6" y="478.7" width="11.7" height="3.8" rx="0.5" stroke-width="1.1"/><rect x="934.6" y="484.8" width="11.7" height="4.8" rx="0.5" stroke-width="1.1"/><path d="M931.6 476.5 L931.6 487.2 L934.6 487.2 M931.6 480.59999999999997 L934.6 480.59999999999997" stroke-width="1"/><path d="M935 486.4 L946 486.4" stroke-width="0.6"/></svg></div>
<div class="rb" style="top:505px"><svg width="35" height="35" viewBox="920 505 35 35" fill="none" stroke="#dfe3e6" stroke-linecap="round" stroke-linejoin="round"><circle cx="937.3" cy="522.8" r="8.4" stroke-width="1.2"/><path d="M937.3 521.1999999999999 L937.3 527.0" stroke-width="2" stroke="#f0f2f3" stroke-linecap="butt"/><circle cx="937.3" cy="518.9" r="1.15" fill="#f0f2f3" stroke="none"/></svg></div>
<div class="rb" style="top:547px"><svg width="35" height="35" viewBox="920 547 35 35" fill="none" stroke="#dfe3e6" stroke-linecap="round" stroke-linejoin="round"><circle cx="937.3" cy="564.5" r="8.4" stroke-width="1.2"/><text x="937.3" y="568.4" text-anchor="middle" font-family="'Liberation Sans',sans-serif" font-weight="bold" font-size="11" fill="#f0f2f3" stroke="none">?</text></svg></div>
<!--/RIGHT-->
</div>

<div id="homebar"></div>
</body>
</html>
